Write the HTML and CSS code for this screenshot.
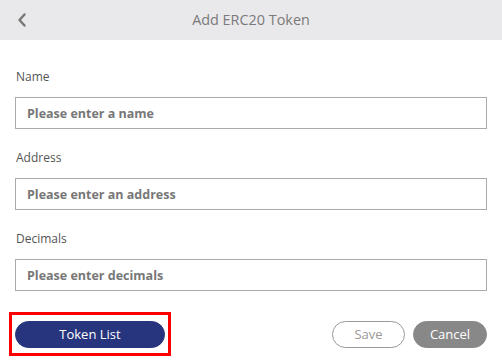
FILE: index.html
```
<!DOCTYPE html>
<html>
<head>
<meta charset="utf-8">
<link rel="stylesheet" href="styles.css">
</head>
<body>
<div class="page">
  <header class="header">
    <span class="back">
      <svg width="10" height="14" viewBox="0 0 10 14"><polyline points="7.5,1.5 2.5,7 7.5,12.5" fill="none" stroke="#777" stroke-width="2.4" stroke-linecap="round" stroke-linejoin="round"/></svg>
    </span>
    <h1 class="title">Add ERC20 Token</h1>
  </header>
  <main class="form">
    <div class="field">
      <label class="label">Name</label>
      <input class="input" type="text" placeholder="Please enter a name">
    </div>
    <div class="field">
      <label class="label">Address</label>
      <input class="input" type="text" placeholder="Please enter an address">
    </div>
    <div class="field">
      <label class="label">Decimals</label>
      <input class="input" type="text" placeholder="Please enter decimals">
    </div>
    <div class="actions">
      <div class="highlight">
        <button class="btn btn-primary">Token List</button>
      </div>
      <div class="right">
        <button class="btn btn-outline">Save</button>
        <button class="btn btn-gray">Cancel</button>
      </div>
    </div>
  </main>
</div>
</body>
</html>
```
FILE: styles.css
```
* { box-sizing: border-box; }
html, body { margin: 0; padding: 0; background: #fff; }
body { font-family: "Open Sans", "Noto Sans", sans-serif; width: 502px; height: 363px; overflow: hidden; }
.header {
  height: 40px;
  background: #e9e9eb;
  display: flex;
  align-items: center;
  justify-content: center;
  position: relative;
}
.back {
  position: absolute;
  left: 17px;
  top: 13px;
  width: 10px;
  height: 14px;
  display: flex;
}
.title {
  margin: 0;
  font-size: 14.4px;
  font-weight: 400;
  color: #7a7a7a;
  line-height: 20px;
}
.form {
  padding: 29px 15px 0 15px;
  display: flex;
  flex-direction: column;
}
.field {
  display: flex;
  flex-direction: column;
  margin-bottom: 21px;
}
.label {
  font-size: 12px;
  line-height: 16px;
  color: #555;
  margin-bottom: 12px;
  padding-left: 1px;
}
.input {
  height: 32px;
  border: 1px solid #aaa;
  border-radius: 0;
  padding: 0 11px;
  font-family: "Open Sans", "Noto Sans", sans-serif;
  font-size: 12.5px;
  font-weight: 700;
  color: #333;
  outline: none;
}
.input::placeholder { color: #777; font-weight: 700; }
.actions {
  display: flex;
  justify-content: space-between;
  align-items: flex-start;
  margin-left: -6px;
}
.highlight {
  border: 3px solid #ff0000;
  padding: 6px 3px 5px 3px;
}
.right {
  display: flex;
  gap: 8px;
  padding-top: 9px;
}
.btn {
  height: 27px;
  border-radius: 14px;
  font-family: "Open Sans", "Noto Sans", sans-serif;
  font-size: 13px;
  line-height: 25px;
  padding: 0;
  cursor: pointer;
}
.btn-primary {
  width: 150px;
  background: #27357e;
  border: 1px solid #27357e;
  color: #fff;
  display: block;
}
.btn-outline {
  width: 73px;
  background: #fff;
  border: 1px solid #999;
  color: #999;
}
.btn-gray {
  width: 74px;
  background: #888;
  border: 1px solid #888;
  color: #fff;
}
```
